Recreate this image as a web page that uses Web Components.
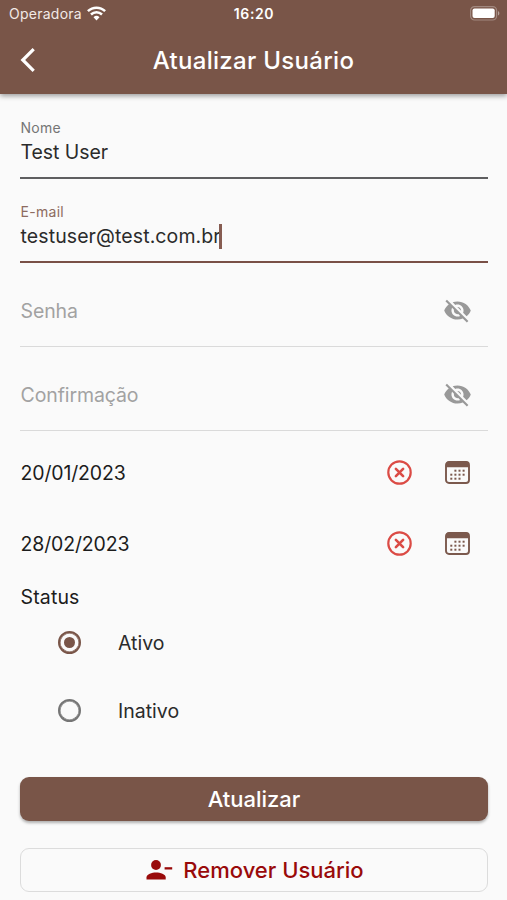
<!DOCTYPE html>
<html lang="pt-BR">
<head>
<meta charset="utf-8">
<title>Atualizar Usuário</title>
<style>
  html, body {
    margin: 0;
    height: 900px;
    overflow: hidden;
    background: #fafafa;
  }
  body {
    --brown: #795548;
    font-family: Inter, Roboto, sans-serif;
    font-size: 19.5px;
    color: #2b2b2b;
  }
</style>
</head>
<body>
  <user-page>
    <app-header slot="header" time="16:20" carrier="Operadora">Atualizar Usuário</app-header>

    <text-field label="Nome" style="--value-spacing: -0.05px">Test User</text-field>
    <text-field label="E-mail" focused style="--value-spacing: 0.1px">testuser@test.com.br</text-field>
    <password-field>Senha</password-field>
    <password-field>Confirmação</password-field>

    <date-row>20/01/2023</date-row>
    <date-row>28/02/2023</date-row>

    <radio-group label="Status">
      <radio-item checked>Ativo</radio-item>
      <radio-item>Inativo</radio-item>
    </radio-group>

    <app-button slot="actions">Atualizar</app-button>
    <app-button slot="actions" outlined>
      <svg slot="icon" width="27" height="22" viewBox="0 0 27 22">
        <circle cx="10" cy="6" r="4.9"/>
        <path d="M.5 20.6v-2.2c0-3.3 5.4-5 9.6-5s9.6 1.7 9.6 5v2.2z"/>
        <path d="M18.6 8.2h7.6v2.3h-7.6z"/>
      </svg>
      Remover Usuário
    </app-button>
  </user-page>

<script>
  // attaches an open shadow root filled from a template string
  class BaseElement extends HTMLElement {
    render(html) {
      const template = document.createElement("template");
      template.innerHTML = html;
      this.attachShadow({ mode: "open" });
      this.shadowRoot.appendChild(template.content.cloneNode(true));
    }
  }

  class UserPage extends BaseElement {
    constructor() {
      super();
      this.render(`
        <style>
          :host {
            display: flex;
            flex-direction: column;
            height: 900px;
          }
          main {
            display: flex;
            flex-direction: column;
            padding: 1px 19px 0 20px;
          }
          .actions {
            display: flex;
            flex-direction: column;
            gap: 27px;
            padding: 32px 19px 0 20px;
          }
        </style>
        <slot name="header"></slot>
        <main><slot></slot></main>
        <div class="actions"><slot name="actions"></slot></div>
      `);
    }
  }

  class AppHeader extends BaseElement {
    connectedCallback() {
      this.render(`
        <style>
          :host {
            display: block;
            height: 94px;
            background: var(--brown);
            color: #fff;
            box-shadow: 0 2px 5px rgba(0, 0, 0, .38);
          }
          .status, .nav {
            display: grid;
            grid-template-columns: 1fr auto 1fr;
            align-items: center;
          }
          .status {
            height: 27px;
            padding: 0 7px 0 9px;
            font-size: 14px;
          }
          .carrier {
            display: flex;
            align-items: center;
            gap: 5px;
            letter-spacing: .25px;
            color: #f1e9e6;
          }
          .time {
            margin-right: 1px;
            font-weight: 600;
            letter-spacing: .6px;
          }
          .battery { justify-self: end; }
          .nav {
            height: 66px;
            padding: 0 20px;
          }
          .title {
            font-size: 24px;
            font-weight: 500;
            letter-spacing: .3px;
          }
          svg { display: block; }
        </style>
        <div class="status">
          <div class="carrier">
            <span>${this.getAttribute("carrier")}</span>
            <svg width="19" height="15" viewBox="0 0 19 15" fill="none" stroke="#fff" stroke-width="2.5">
              <path d="M.9 5.2a12.3 12.3 0 0 1 17.2 0"/>
              <path d="M4 8.5a7.9 7.9 0 0 1 11 0"/>
              <path d="M9.5 14.4l-3-3.1a4.3 4.3 0 0 1 6 0z" fill="#fff" stroke="none"/>
            </svg>
          </div>
          <span class="time">${this.getAttribute("time")}</span>
          <svg class="battery" width="30" height="15" viewBox="0 0 30 15">
            <rect x=".6" y=".6" width="26" height="13.4" rx="4" fill="none" stroke="#fff" stroke-opacity=".3" stroke-width="1.2"/>
            <rect x="2.5" y="2.6" width="22.2" height="9.4" rx="2" fill="#fff"/>
            <path d="M28 5v4.6c1.9-.8 1.9-3.8 0-4.6z" fill="#fff" fill-opacity=".45"/>
          </svg>
        </div>
        <div class="nav">
          <svg width="16" height="26" viewBox="0 0 16 26" fill="none" stroke="#fff" stroke-width="3.2">
            <path d="M13.7 2.2L2.8 13l10.9 10.8"/>
          </svg>
          <span class="title"><slot></slot></span>
        </div>
      `);
    }
  }

  class TextField extends BaseElement {
    connectedCallback() {
      this.render(`
        <style>
          :host {
            display: flex;
            flex-direction: column;
            box-sizing: border-box;
            height: 84px;
            padding: 24px 0 0 .5px;
            border-bottom: 2px solid #5e5e60;
          }
          :host([focused]) {
            border-bottom-color: #795046;
          }
          .label {
            font-size: 14px;
            line-height: 17px;
            letter-spacing: .3px;
            color: #757575;
          }
          :host([focused]) .label { color: #8d6b60; }
          .value {
            display: flex;
            align-items: center;
            height: 32px;
            letter-spacing: var(--value-spacing, 0);
          }
          .caret {
            width: 2.5px;
            height: 25px;
            margin-left: -1.5px;
            background: #865c51;
          }
        </style>
        <span class="label">${this.getAttribute("label")}</span>
        <span class="value"><slot></slot>${this.hasAttribute("focused") ? '<i class="caret"></i>' : ""}</span>
      `);
    }
  }

  class PasswordField extends BaseElement {
    constructor() {
      super();
      this.render(`
        <style>
          :host {
            display: flex;
            justify-content: space-between;
            align-items: center;
            box-sizing: border-box;
            height: 84px;
            padding: 12px 16px 0 .5px;
            border-bottom: 1px solid #dadada;
            color: #a2a2a2;
            letter-spacing: -.1px;
          }
          svg { display: block; }
        </style>
        <slot></slot>
        <svg width="29" height="29" viewBox="0 0 24 24" fill="#999">
          <path d="M12 7c2.76 0 5 2.24 5 5 0 .65-.13 1.26-.36 1.83l2.92 2.92c1.51-1.26 2.7-2.89 3.43-4.75-1.73-4.39-6-7.5-11-7.5-1.4 0-2.74.25-3.98.7l2.16 2.16C10.74 7.13 11.35 7 12 7zM2 4.27l2.28 2.28.46.46C3.08 8.3 1.78 10.02 1 12c1.73 4.39 6 7.5 11 7.5 1.55 0 3.03-.3 4.38-.84l.42.42L19.73 22 21 20.73 3.27 3 2 4.27zM7.53 9.8l1.55 1.55c-.05.21-.08.43-.08.65 0 1.66 1.34 3 3 3 .22 0 .44-.03.65-.08l1.55 1.55c-.67.33-1.41.53-2.2.53-2.76 0-5-2.24-5-5 0-.79.2-1.53.53-2.2zm4.31-.78l3.15 3.15.02-.16c0-1.66-1.34-3-3-3l-.17.01z"/>
        </svg>
      `);
    }
  }

  class DateRow extends BaseElement {
    constructor() {
      super();
      // calendar dots, the first row starts at the second column
      const dots = [[1, 0], [2, 0], [3, 0], [0, 1], [1, 1], [2, 1], [3, 1], [0, 2], [1, 2], [2, 2]]
        .map(([x, y]) => `<rect x="${5.3 + x * 4.1}" y="${8.7 + y * 4}" width="2" height="2"/>`)
        .join("");
      this.render(`
        <style>
          :host {
            display: flex;
            justify-content: space-between;
            align-items: center;
            height: 71px;
            padding: 0 18px 0 .5px;
            color: #1c1c1c;
            letter-spacing: -.15px;
          }
          :host(:first-of-type) { margin-top: 6px; }
          .icons {
            display: flex;
            align-items: center;
            gap: 33px;
          }
          svg { display: block; }
        </style>
        <slot></slot>
        <div class="icons">
          <svg width="25" height="25" viewBox="0 0 25 25" fill="none" stroke="#db4b45">
            <circle cx="12.5" cy="12.5" r="11.2" stroke-width="2.2"/>
            <path d="M8.9 8.9l7.2 7.2M16.1 8.9l-7.2 7.2" stroke-width="2.6" stroke-linecap="round"/>
          </svg>
          <svg width="25" height="23" viewBox="0 0 25 23" fill="#7b594d">
            <rect x="1" y="1" width="23" height="21" rx="3" fill="none" stroke="#7b594d" stroke-width="1.9"/>
            <path d="M1 6.2V3.5a3 3 0 0 1 3-3h17a3 3 0 0 1 3 3v2.7z"/>
            ${dots}
          </svg>
        </div>
      `);
    }
  }

  class RadioGroup extends BaseElement {
    connectedCallback() {
      this.render(`
        <style>
          :host {
            display: flex;
            flex-direction: column;
            padding-left: .5px;
          }
          .label {
            height: 29px;
            line-height: 36px;
            letter-spacing: .15px;
            color: #1c1c1c;
          }
        </style>
        <span class="label">${this.getAttribute("label")}</span>
        <slot></slot>
      `);
    }
  }

  class RadioItem extends BaseElement {
    constructor() {
      super();
      this.render(`
        <style>
          :host {
            display: flex;
            align-items: center;
            gap: 37.5px;
            height: 68.3px;
            padding-left: 37px;
          }
          .dot {
            display: grid;
            place-items: center;
            box-sizing: border-box;
            width: 23px;
            height: 23px;
            border: 2px solid #757575;
            box-shadow: inset 0 0 0 .5px #757575;
            border-radius: 50%;
          }
          :host([checked]) .dot {
            border-color: var(--brown);
            box-shadow: inset 0 0 0 .5px var(--brown);
          }
          :host([checked]) .dot::after {
            content: "";
            width: 11px;
            height: 11px;
            border-radius: 50%;
            background: var(--brown);
          }
          .text { padding-top: 2px; }
        </style>
        <span class="dot"></span>
        <span class="text"><slot></slot></span>
      `);
    }
  }

  class AppButton extends BaseElement {
    constructor() {
      super();
      this.render(`
        <style>
          :host {
            display: flex;
            justify-content: center;
            align-items: center;
            gap: 10px;
            box-sizing: border-box;
            height: 44px;
            border-radius: 9px;
            background: var(--brown);
            color: #fff;
            font-size: 22px;
            font-weight: 500;
            box-shadow: 0 2px 3px rgba(0, 0, 0, .3);
          }
          :host([outlined]) {
            padding-left: 2px;
            background: none;
            border: 1px solid #dcdcdc;
            color: #990a0a;
            fill: #990a0a;
            box-shadow: none;
          }
        </style>
        <slot name="icon"></slot>
        <span><slot></slot></span>
      `);
    }
  }

  customElements.define("user-page", UserPage);
  customElements.define("app-header", AppHeader);
  customElements.define("text-field", TextField);
  customElements.define("password-field", PasswordField);
  customElements.define("date-row", DateRow);
  customElements.define("radio-group", RadioGroup);
  customElements.define("radio-item", RadioItem);
  customElements.define("app-button", AppButton);
</script>
</body>
</html>
